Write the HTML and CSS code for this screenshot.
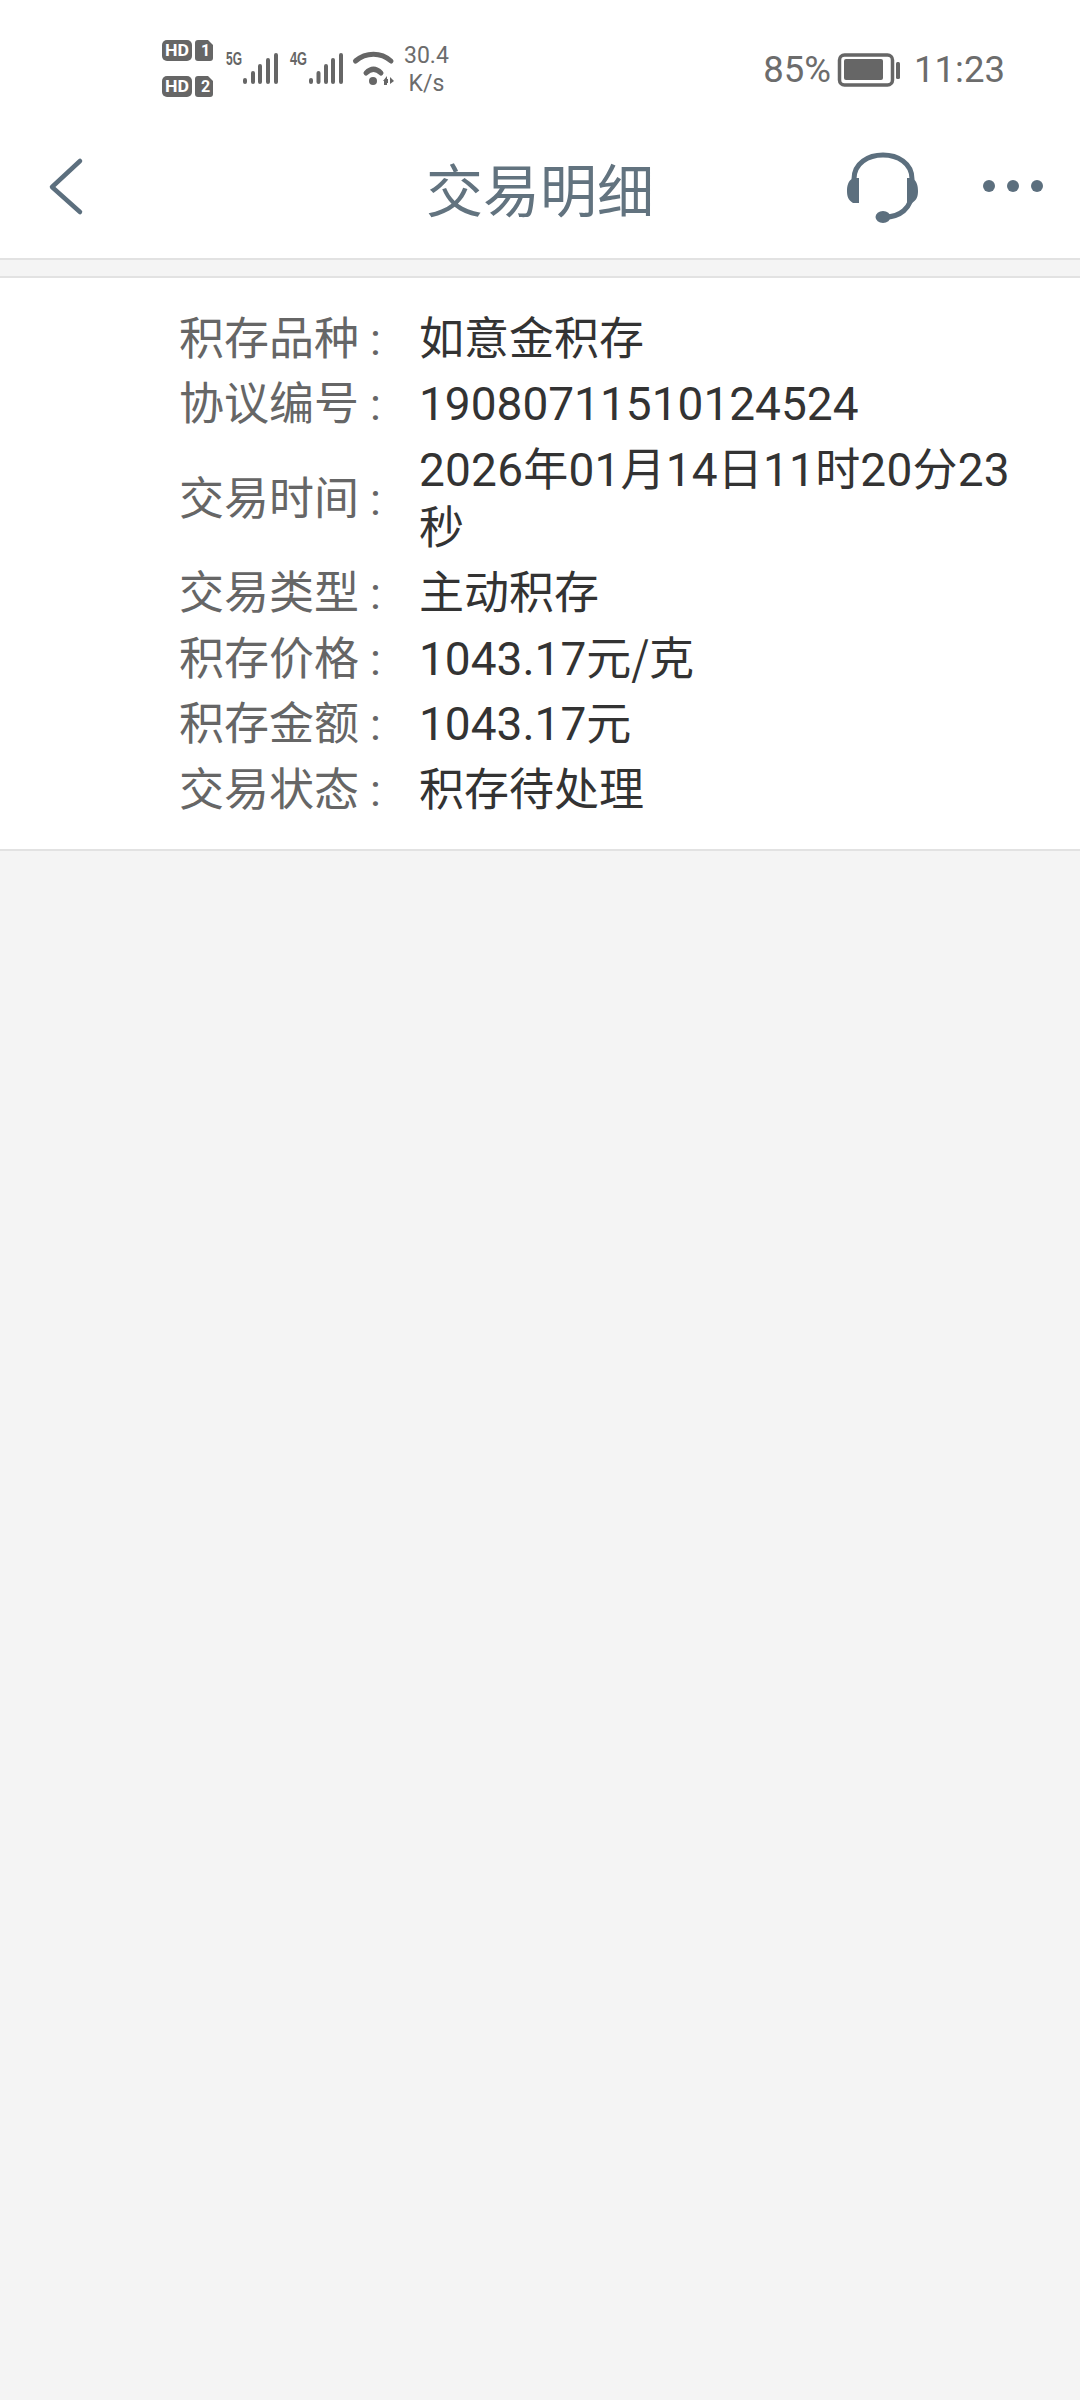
FILE: index.html
```html
<!DOCTYPE html>
<html lang="zh">
<head>
<meta charset="utf-8">
<title>交易明细</title>
<link rel="stylesheet" href="styles.css">
</head>
<body>
<div class="topbar">
  <div class="status">
    <svg class="status-icons" width="240" height="64" viewBox="0 0 240 64">
      <rect class="ic" x="0" y="3" width="30" height="21" rx="5"/>
      <text class="hd" x="3" y="19" textLength="24" lengthAdjust="spacingAndGlyphs">HD</text>
      <path class="ic" d="M39 3h7l5 5v13a3 3 0 0 1-3 3h-12a3 3 0 0 1-3-3v-15a3 3 0 0 1 3-3z"/>
      <text class="hd" x="43.500" y="19" text-anchor="middle">1</text>
      <rect class="ic" x="0" y="39" width="30" height="21" rx="5"/>
      <text class="hd" x="3" y="55" textLength="24" lengthAdjust="spacingAndGlyphs">HD</text>
      <path class="ic" d="M39 39h7l5 5v13a3 3 0 0 1-3 3h-12a3 3 0 0 1-3-3v-15a3 3 0 0 1 3-3z"/>
      <text class="hd" x="43.500" y="55" text-anchor="middle">2</text>

      <text class="net" x="64" y="28" textLength="16" lengthAdjust="spacingAndGlyphs">5G</text>
      <path class="bars" d="M83 43v2M91 36v9M98 29v16M106 23v22M114 18v27"/>
      <text class="net" x="128" y="28" textLength="17" lengthAdjust="spacingAndGlyphs">4G</text>
      <path class="bars" d="M149 43v2M156.500 36v9M164 29v16M171 23v22M179 18v27"/>
      <path class="wifi" d="M193.500 24C204 15 219 15 229 24M204 36C209 31 214 31 219 36"/>
      <circle class="ic" cx="211" cy="44" r="4"/>
      <path class="ic" d="M221 44l4-5v3h1v4h-1v2h-3v-4zM228 40l4 4-4 3z"/>
    </svg>
    <div class="speed"><span>30.4</span><span>K/s</span></div>
    <div class="status-right">
      <span class="pct">85%</span>
      <svg class="battery" width="64" height="34" viewBox="0 0 64 34">
        <rect class="bat-shell" x="3.500" y="2" width="53" height="30" rx="5"/>
        <rect class="ic" x="8" y="6" width="39" height="21" rx="2"/>
        <rect class="ic" x="60" y="9" width="4" height="17" rx="1.500"/>
      </svg>
      <span class="time">11:23</span>
    </div>
  </div>
  <div class="nav">
    <div class="nav-left">
      <svg class="back" width="36" height="60" viewBox="0 0 36 60"><path d="M32 5L4 31l28 25"/></svg>
    </div>
    <h1 class="title">交易明细</h1>
    <div class="nav-right">
      <svg class="headset" width="84" height="80" viewBox="0 0 84 80">
        <path class="hs-line" d="M13 30C13 -2 71 -2 71 30V42C71 60 58 68 44 68"/>
        <path class="hs-fill" d="M18 29v25h-6c-5-3-6-7-6-12s1-10 6-13zM66 29v25h5c5-3 6-7 6-12s-1-10-6-13z"/>
        <ellipse class="hs-fill" cx="42" cy="68" rx="7.500" ry="6"/>
      </svg>
      <svg class="dots" width="68" height="16" viewBox="0 0 68 16">
        <circle cx="8" cy="8" r="6"/><circle cx="32" cy="8" r="6"/><circle cx="56" cy="8" r="6"/>
      </svg>
    </div>
  </div>
</div>

<div class="card">
  <div class="row"><div class="label">积存品种<span class="colon">:</span></div><div class="value">如意金积存</div></div>
  <div class="row"><div class="label">协议编号<span class="colon">:</span></div><div class="value"><span class="num">19080711510124524</span></div></div>
  <div class="row"><div class="label">交易时间<span class="colon">:</span></div><div class="value date"><span class="num">2026</span>年<span class="num">01</span>月<span class="num">14</span>日<span class="num">11</span>时<span class="num">20</span>分<span class="num">23</span>秒</div></div>
  <div class="row"><div class="label">交易类型<span class="colon">:</span></div><div class="value">主动积存</div></div>
  <div class="row"><div class="label">积存价格<span class="colon">:</span></div><div class="value"><span class="num">1043.17</span>元/克</div></div>
  <div class="row"><div class="label">积存金额<span class="colon">:</span></div><div class="value"><span class="num">1043.17</span>元</div></div>
  <div class="row"><div class="label">交易状态<span class="colon">:</span></div><div class="value">积存待处理</div></div>
</div>
</body>
</html>
```

FILE: styles.css
```css
* { box-sizing: border-box; }
html, body { margin: 0; padding: 0; }
body {
  width: 1080px;
  height: 2400px;
  background: #f4f4f4;
  font-family: Roboto, "Noto Sans CJK SC", sans-serif;
  overflow: hidden;
}

.topbar {
  background: #fff;
  height: 260px;
  border-bottom: 2px solid #e2e2e2;
}

.status {
  height: 122px;
  display: flex;
  align-items: center;
  padding: 16px 75px 0 162px;
  color: #6c6c6c;
}
.status-icons { flex: none; }
.ic { fill: #666; }
.hd {
  font: 700 16px Roboto, sans-serif;
  fill: #fff;
}
.net {
  font: 700 18px "Liberation Sans", sans-serif;
  fill: #666;
}
.bars {
  fill: none;
  stroke: #666;
  stroke-width: 4px;
  stroke-linecap: round;
}
.wifi {
  fill: none;
  stroke: #666;
  stroke-width: 5px;
  stroke-linecap: round;
}
.speed {
  display: flex;
  flex-direction: column;
  align-items: center;
  margin: 2px 0 0 2px;
  font: 400 23px/28px Roboto, sans-serif;
}
.status-right {
  margin: 2px 0 0 auto;
  display: flex;
  align-items: center;
}
.pct, .time { font: 400 36.500px/44px Roboto, sans-serif; }
.battery { margin: 0 0 0 5px; }
.bat-shell { fill: none; stroke: #666; stroke-width: 3.500px; }
.time { margin-left: 14px; }

.nav {
  height: 136px;
  display: grid;
  grid-template-columns: 1fr auto 1fr;
  align-items: center;
}
.nav-left { padding-left: 48px; display: flex; margin-top: -8px; }
.back path {
  fill: none;
  stroke: #5c6f7e;
  stroke-width: 4.500px;
  stroke-linecap: round;
  stroke-linejoin: round;
}
.title {
  margin: -6px 0 0;
  font: 400 57px/72px "Noto Sans CJK SC", sans-serif;
  color: #62737f;
}
.nav-right {
  display: flex;
  align-items: center;
  justify-content: flex-end;
  padding-right: 31px;
  margin-top: -8px;
}
.headset { margin-right: 56px; margin-top: 6px; }
.hs-line { fill: none; stroke: #5c6f7e; stroke-width: 5px; }
.hs-fill { fill: #5c6f7e; }
.dots { fill: #5c6f7e; }

.card {
  margin-top: 16px;
  background: #fff;
  border-top: 2px solid #e2e2e2;
  border-bottom: 2px solid #e2e2e2;
  padding: 25px 40px 28px 179px;
  height: 575px;
  font-size: 45px;
  line-height: 58px;
  font-family: "Noto Sans CJK SC", sans-serif;
}
.row {
  display: flex;
  align-items: center;
  padding: 3.750px 0;
}
.label {
  flex: none;
  width: 240px;
  color: #666;
}
.colon {
  font-family: Roboto, sans-serif;
  line-height: 1;
  margin-left: 11px;
}
.value {
  flex: 1;
  min-width: 0;
  color: #333;
}
.date { letter-spacing: 0.200px; }
.num {
  font-family: Roboto, sans-serif;
  font-size: 46px;
  line-height: 1;
}
```
